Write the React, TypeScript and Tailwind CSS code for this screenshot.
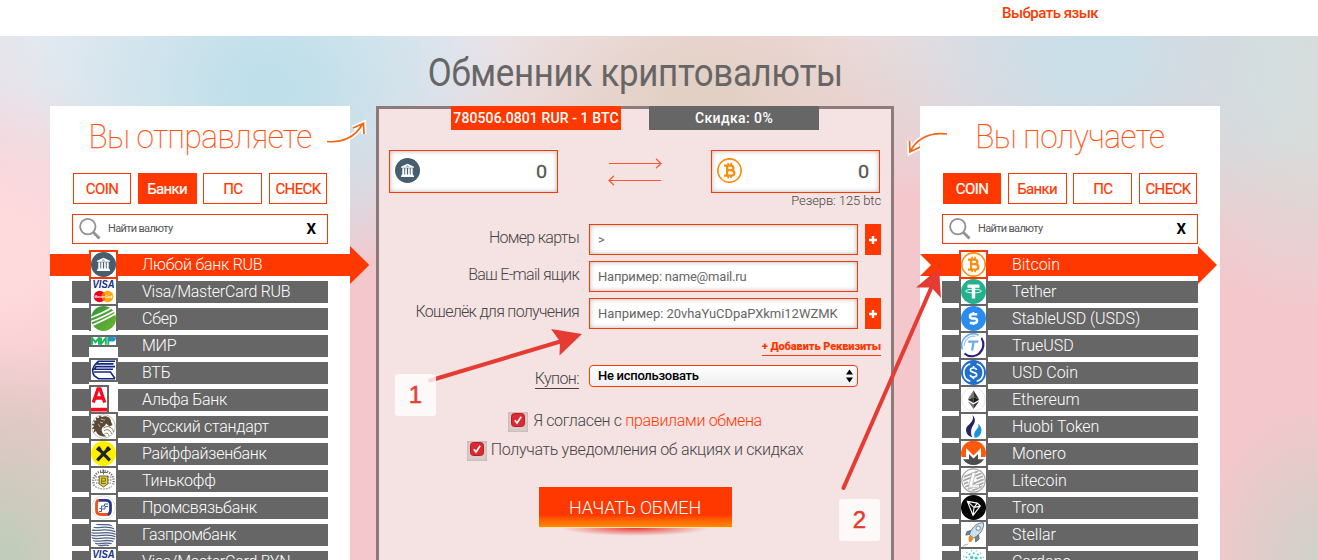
import type { ReactNode } from 'react';

type Item = { name: string; icon: ReactNode; w?: number; h?: number; offset?: boolean };

const Visa = () => (
  <svg viewBox="0 0 25 25" className="block h-full w-full bg-white">
    <text x="12.5" y="8.8" textAnchor="middle" textLength="22" lengthAdjust="spacingAndGlyphs" fontFamily="Liberation Sans" fontWeight="700" fontStyle="italic" fontSize="10.5" fill="#142d86">VISA</text>
    <circle cx="8.6" cy="17.5" r="5.8" fill="#eb001b" />
    <circle cx="16.6" cy="17.5" r="5.8" fill="#ffa90a" />
    <path d="M12.6 13.2a6 6 0 0 0 0 8.6a6 6 0 0 0 0-8.6" fill="#f36a12" />
    <text x="12.6" y="19" textAnchor="middle" textLength="18" lengthAdjust="spacingAndGlyphs" fontFamily="Liberation Sans" fontWeight="700" fontSize="4.4" fill="#fff">MasterCard</text>
  </svg>
);

const Bank = () => (
  <svg viewBox="0 0 25 25" className="block h-full w-full">
    <circle cx="12.5" cy="12.5" r="12.5" fill="#465e6e" />
    <path d="M6 9.7V8.7L12.5 5.8L19 8.7V9.7ZM7.3 10.2h2v6.2h-2zM10.2 10.2h1.7v6.2h-1.7zM13.1 10.2h1.7v6.2h-1.7zM15.7 10.2h2v6.2h-2zM6.8 16.4h11.4v1.1H6.8zM6 17.5h13v1.4H6z" fill="#fff" />
    <path d="M10.8 8.5l1.7-.9l1.7.9z" fill="#465e6e" />
  </svg>
);

const Btc = () => (
  <svg viewBox="0 0 25 25" className="block h-full w-full">
    <circle cx="12.5" cy="12.5" r="11.7" fill="#fff" stroke="#f98e0c" strokeWidth="1.7" />
    <g fill="none" stroke="#f98e0c">
      <path d="M7 7.6H13.5C17.3 7.6 17.3 12.2 13.7 12.2H10M13.7 12.2C18.5 12.2 18.4 17.6 13.8 17.6H7M10.1 7.6V17.6" strokeWidth="2.3" />
      <path d="M11.2 4.8V8M14.1 4.8V8M11.2 17V20.3M14.1 17V20.3" strokeWidth="1.7" />
    </g>
  </svg>
);

const Sber = () => (
  <svg viewBox="0 0 25 25" className="block h-full w-full">
    <defs>
      <linearGradient id="sber" x1="0" y1="0" x2="1" y2="1"><stop stopColor="#30943d" /><stop offset="1" stopColor="#70b52c" /></linearGradient>
      <clipPath id="sberClip"><circle cx="12.5" cy="12.5" r="12.5" /></clipPath>
    </defs>
    <circle cx="12.5" cy="12.5" r="12.5" fill="url(#sber)" />
    <g clipPath="url(#sberClip)" stroke="#fff" strokeWidth="1.7" fill="none">
      <path d="M-1 12C7 9 14 6 22 1M-1 16C8 13 16 9 25 4M-1 20C8 17 17 12 26 7" />
    </g>
  </svg>
);

const Mir = () => (
  <svg viewBox="0 0 25 8" preserveAspectRatio="none" className="block h-full w-full">
    <path d="M1 7.7V1L4.5 5.2L8 1V7.7M10 .5v6.5L14.8 1v6.7M17.3 7.7V1h5" fill="none" stroke="#19b35c" strokeWidth="1.9" />
    <path d="M17 .3H25C25 3 23.8 4.5 22 4.5H18.5C17.5 4 17 2 17 .3" fill="#1b94d2" />
  </svg>
);

const Vtb = () => (
  <svg viewBox="0 0 25 20" className="block h-full w-full">
    <g fill="none" stroke="#132a83" strokeWidth="1.6">
      <path d="M24 1.2H7.5L5.5 3.9H22.5M24 6.600H5L3.5 9.3H22M7 1.5C1 7 .5 12 3.5 16L7.5 18.7H24M3 12H19.5L24 18.500" />
    </g>
  </svg>
);

const Alfa = () => (
  <svg viewBox="0 0 16 25" className="block h-full w-full">
    <path d="M2.3 15.5L7 1.8H9L13.7 15.5M4 11H12" fill="none" stroke="#fa0a1c" strokeWidth="3.3" />
    <path d="M0 20.8H16V24.5H0z" fill="#fa0a1c" />
  </svg>
);

const RusStd = () => (
  <svg viewBox="0 0 25 25" className="block h-full w-full">
    <circle cx="12.5" cy="12.5" r="11.8" fill="#fff" stroke="#c8c2b8" strokeWidth="1" />
    <path d="M8.5 1.5L11 3C15 1 20 3.5 20 7.5L21.5 11L18.5 12.4L15 9.5C14 14 10 12 10.8 17C11.3 20 14 21.5 16 22.5C10 23 6 21 5 17L2.2 19L3.4 15L.8 15L3 12L.6 10.6L3.7 9.2L2 6.4L5.2 6.4L4.8 3.3L7.5 4.2z" fill="#5b4a35" />
    <path d="M12.5 14C17 10.5 22 14 22.5 18M13 17C17 14 20 17 20.5 20M13.5 20C16 18 18 20 18 22" fill="none" stroke="#8b7c69" strokeWidth="1" />
    <path d="M10 5L14 6.2M9 8L12 8.8M7.5 10L9 13" stroke="#d7cbb8" strokeWidth=".8" />
  </svg>
);

const Raif = () => (
  <svg viewBox="0 0 25 25" className="block h-full w-full">
    <circle cx="12.5" cy="12.5" r="12.5" fill="#fff000" />
    <path d="M6.2 19.3L12.5 12.8L18.8 19.3M12.5 12.8L7.5 7.7M12.5 12.8L17.5 7.7" fill="none" stroke="#232323" strokeWidth="3.2" />
    <path d="M4.8 8.3L8 5L10.5 7.5L7.5 10.4zM20.2 8.3L17 5L14.5 7.5L17.5 10.4z" fill="#232323" />
  </svg>
);

const Tink = () => (
  <svg viewBox="0 0 25 25" className="block h-full w-full">
    <g fill="none" stroke="#6a6a6a">
      <path d="M3.3 17.5A10.2 10.2 0 1 1 21.7 17.5" strokeWidth="2.2" strokeDasharray="1.1 1.3" />
      <path d="M4.5 9h4M4 12h4M5 15h3M16.5 9h4M17 12h4M17 15h3" strokeWidth="1.2" strokeDasharray="1.5 .7" />
      <path d="M9 4.5h7M12.5 1.5v5" strokeWidth="1.1" />
    </g>
    <path d="M8.2 8h8.6v8L12.5 19L8.2 16z" fill="#e3d029" stroke="#555" strokeWidth=".9" />
    <path d="M10.7 16V10.2h3.6v3h-3.6M10.7 15.5h4" fill="none" stroke="#776a20" strokeWidth="1" />
    <path d="M4 18.5Q12.5 23.5 21 18.5" fill="none" stroke="#a59f84" strokeWidth="1.2" strokeDasharray="2 .8" />
  </svg>
);

const Psb = () => (
  <svg viewBox="0 0 25 25" className="block h-full w-full">
    <circle cx="12.5" cy="12.5" r="11.8" fill="#fff" stroke="#e3e3e3" strokeWidth="1" />
    <path d="M17 19.5H10C6.5 19.5 5.5 18 5.5 15V9C5.5 7 6.2 5.5 8 5.2" fill="none" stroke="#f4511e" strokeWidth="2.8" />
    <path d="M8 5.3H15C18.2 5.3 19.5 6.6 19.5 9.8V15C19.5 17.3 18.8 19 16.8 19.6" fill="none" stroke="#2b3990" strokeWidth="2.8" />
    <path d="M8 16.5H10.5V14H14V11.5H17M8.5 13.5H10.5V11H13.5V9H17" fill="none" stroke="#4a5ba5" strokeWidth="1" />
  </svg>
);

const Gaz = () => (
  <svg viewBox="0 0 25 25" className="block h-full w-full">
    <defs><clipPath id="gaz"><circle cx="12.5" cy="12.5" r="12.2" /></clipPath></defs>
    <g clipPath="url(#gaz)" fill="none" stroke="#4f6189" strokeWidth="1.3">
      <path d="M3 2C9 4 15 1 22 4M1 5C8 7 15 3 24 7M0 8C8 10 15 5 25 10M0 10.5C8 13 16 8 25 12.5M0 13C8 16 16 10 25 15M0 15.5C8 19 16 13 25 17.5M1 18.5C9 21 16 16 24 20M4 21.5C10 23 15 19 22 22.5M7 24C12 24 15 22 19 24" />
    </g>
  </svg>
);

const Tether = () => (
  <svg viewBox="0 0 25 25" className="block h-full w-full">
    <circle cx="12.5" cy="12.5" r="12.5" fill="#22b08d" />
    <path d="M6.5 5.5H18.5V8.7H14.2V19.5H10.8V8.7H6.5z" fill="#fff" />
    <ellipse cx="12.5" cy="12.1" rx="8" ry="1.8" fill="none" stroke="#fff" strokeWidth=".9" />
  </svg>
);

const Stable = () => (
  <svg viewBox="0 0 25 25" className="block h-full w-full">
    <circle cx="12.5" cy="12.5" r="12.5" fill="#2b8cf0" />
    <path d="M16.2 8.3H11.4C9.5 8.3 9 9.2 9 10.3C9 11.6 9.9 12.4 11.5 12.4H13.7C15.2 12.4 16 13.3 16 14.7C16 16 15.2 16.9 13.7 16.9H8.8" fill="none" stroke="#fff" strokeWidth="2.5" />
    <path d="M12.3 6V8M12.5 17V19" stroke="#fff" strokeWidth="1.8" />
  </svg>
);

const TrueUsd = () => (
  <svg viewBox="0 0 25 25" className="block h-full w-full">
    <path d="M1.6 16.5A11.4 11.4 0 0 1 17.5 2.2" fill="none" stroke="#68abf2" strokeWidth="1.6" />
    <path d="M20.5 5A11.6 11.6 0 0 1 3.5 20.5A10.5 10.5 0 0 0 19.5 18.5C22.5 15 22.8 9.5 20.5 5" fill="#2b1f78" stroke="#2b1f78" strokeWidth="1.8" />
    <path d="M3.4 13A9.2 9.2 0 0 1 14.5 3.4" fill="none" stroke="#9bc7f5" strokeWidth="1.2" />
    <path d="M7.5 7.5H17.7L17 9.7H13.6L12.2 17.5H9.9L11.3 9.7H7z" fill="#68abf2" />
  </svg>
);

const Usdc = () => (
  <svg viewBox="0 0 25 25" className="block h-full w-full">
    <circle cx="12.5" cy="12.5" r="12.5" fill="#1f6ed0" />
    <g fill="none" stroke="#fff" strokeWidth="1.7">
      <path d="M9.3 3.7A9.2 9.2 0 0 0 9.3 21.3M15.7 3.7A9.2 9.2 0 0 1 15.7 21.3" />
      <path d="M15.6 10C15.2 8.4 14 8 12.4 8C10.4 8 9.4 8.8 9.4 10.1C9.4 13.3 15.7 11.4 15.7 14.8C15.7 16.3 14.4 17 12.6 17C10.7 17 9.5 16.4 9.2 14.8M12.5 6V8M12.5 17V19.2" />
    </g>
  </svg>
);

const Eth = () => (
  <svg viewBox="0 0 25 25" className="block h-full w-full">
    <circle cx="12.5" cy="12.5" r="11.8" fill="#fff" stroke="#e6e6e6" strokeWidth="1" />
    <path d="M12.5 3.2L6.8 12.6L12.5 10z" fill="#777" /><path d="M12.5 3.2L18.2 12.6L12.5 10z" fill="#343434" />
    <path d="M6.8 12.8L12.5 10V16.1z" fill="#333" /><path d="M18.2 12.8L12.5 10V16.1z" fill="#151515" />
    <path d="M6.8 14.2L12.5 17.5V22z" fill="#777" /><path d="M18.2 14.2L12.5 17.5V22z" fill="#303030" />
  </svg>
);

const Huobi = () => (
  <svg viewBox="0 0 25 25" className="block h-full w-full">
    <path d="M11.6 1C14.8 5 14.4 8 12.2 11.2C10 14.2 9.2 19 11.2 23.4C6 21.5 4.5 18 5.2 14.5C6 10.5 13.8 8.4 11.6 1" fill="#25265f" />
    <path d="M17.2 9.7C20.5 12.5 21 16 20 19C19 22 16.5 23.7 13.7 23.7C12.4 20.3 13.5 17.6 15.5 15.5C17.4 13.4 17.8 12 17.2 9.7" fill="#1894dc" />
  </svg>
);

const Monero = () => (
  <svg viewBox="0 0 25 25" className="block h-full w-full">
    <path d="M.6 16A12.5 12.5 0 1 1 24.4 16H20V7L12.5 14.5L5 7V16z" fill="#ff5a0a" />
    <path d="M2 18.2H8V13L12.5 17.5L17 13V18.2H23A12.5 12.5 0 0 1 2 18.2" fill="#4c4c4c" />
  </svg>
);

const Ltc = () => (
  <svg viewBox="0 0 25 25" className="block h-full w-full">
    <defs><clipPath id="ltc"><circle cx="12.5" cy="12.5" r="10.5" /></clipPath></defs>
    <circle cx="12.5" cy="12.5" r="11.7" fill="#fff" stroke="#a4a4a4" strokeWidth="1.2" />
    <g clipPath="url(#ltc)"><path d="M0 10L25 0M0 13.5L25 3.5M0 17L25 7M0 20.5L25 10.5M0 24L25 14M2 26.5L25 17" stroke="#a9a9a9" strokeWidth="1.8" /></g>
    <path d="M13.2 4.5L9.5 18.5H18M7.5 14.5L15.5 11" fill="none" stroke="#fff" strokeWidth="3.6" />
    <path d="M14.5 4.5L11.5 16.8H18.5V19.3H7.5L11 4.5z" fill="none" stroke="#aaa" strokeWidth=".7" />
  </svg>
);

const Tron = () => (
  <svg viewBox="0 0 25 25" className="block h-full w-full">
    <circle cx="12.5" cy="12.5" r="12.5" fill="#050505" />
    <path d="M6.4 6.4L16.4 8.1L19.3 11.1L12 20.3zM6.4 6.4L13 12.4L12 20.3M13 12.4L16.4 8.1M13 12.4L19.3 11.1" fill="none" stroke="#fff" strokeWidth="1.1" />
  </svg>
);

const Stellar = () => (
  <svg viewBox="0 0 25 25" className="block h-full w-full">
    <path d="M10 8.5L6 9.5L4.8 13.2L9 12.3zM17.5 12.5L18.2 17L14.7 20L14.3 15.5z" fill="#70879a" stroke="#4a5560" strokeWidth=".7" />
    <path d="M22.5.8C17 .2 11 4.5 8.3 12.5L12.5 16C20 12.5 23.2 6 22.5.8z" fill="#c8e3ef" stroke="#53616d" strokeWidth=".8" />
    <circle cx="17.2" cy="6.2" r="2.2" fill="#fff" stroke="#65747e" strokeWidth=".9" />
    <path d="M9 13.3L12 15.8C12 18.8 10.8 19.8 8.2 20.2C7.2 18 7 14.8 9 13.3" fill="#f08b22" />
    <path d="M2.2 24.5L4.6 22M5.2 23.5L7 21.6" stroke="#777" strokeWidth=".8" />
  </svg>
);

const Cardano = () => (
  <svg viewBox="0 0 25 25" className="block h-full w-full">
    <g fill="none" stroke="#3cc8c8" strokeLinecap="round">
      <circle cx="12.5" cy="12.5" r="11" strokeWidth="1.2" strokeDasharray="0 4.94" />
      <circle cx="12.5" cy="12.5" r="8.3" strokeWidth="2" strokeDasharray="0 4.35" />
      <circle cx="12.5" cy="12.5" r="4.4" strokeWidth="3.2" strokeDasharray="0 4.6" />
    </g>
  </svg>
);

const sendItems: Item[] = [
  { name: 'Любой банк RUB', icon: <Bank /> },
  { name: 'Visa/MasterCard RUB', icon: <Visa /> },
  { name: 'Сбер', icon: <Sber /> },
  { name: 'МИР', icon: <Mir />, h: 8, offset: true },
  { name: 'ВТБ', icon: <Vtb />, h: 20 },
  { name: 'Альфа Банк', icon: <Alfa />, w: 16 },
  { name: 'Русский стандарт', icon: <RusStd /> },
  { name: 'Райффайзенбанк', icon: <Raif /> },
  { name: 'Тинькофф', icon: <Tink /> },
  { name: 'Промсвязьбанк', icon: <Psb /> },
  { name: 'Газпромбанк', icon: <Gaz /> },
  { name: 'Visa/MasterCard BYN', icon: <Visa /> },
];

const getItems: Item[] = [
  { name: 'Bitcoin', icon: <Btc /> },
  { name: 'Tether', icon: <Tether /> },
  { name: 'StableUSD (USDS)', icon: <Stable /> },
  { name: 'TrueUSD', icon: <TrueUsd /> },
  { name: 'USD Coin', icon: <Usdc /> },
  { name: 'Ethereum', icon: <Eth /> },
  { name: 'Huobi Token', icon: <Huobi /> },
  { name: 'Monero', icon: <Monero /> },
  { name: 'Litecoin', icon: <Ltc /> },
  { name: 'Tron', icon: <Tron /> },
  { name: 'Stellar', icon: <Stellar /> },
  { name: 'Cardano', icon: <Cardano /> },
];

function Row({ item, active, side }: { item: Item; active: boolean; side: 'send' | 'get' }) {
  return (
    <li className="relative mb-[5px] flex h-[22px]">
      {active && side === 'send' && (
        <svg className="absolute -left-[22px] -top-2 h-[38px] w-[320px]" viewBox="0 0 320 38"><path d="M0 8H300V0L319.3 19L300 38V30H0z" fill="#ff3800" /></svg>
      )}
      {active && side === 'get' && (
        <svg className="absolute -left-[22px] -top-2 h-[38px] w-[320px]" viewBox="0 0 320 38"><path d="M0 8H278V0L297 19L278 38V30H0L11 19z" fill="#ff3800" /></svg>
      )}
      <div className={`flex w-full ${active ? '' : 'bg-[#666]'}`}>
        <div className={`relative -mt-1 ml-[17px] h-[29px] w-[29px] shrink-0 ${active ? 'z-10' : ''} ${item.offset ? 'pt-[4px]' : ''} bg-white`}>
          <div className={`border-2 bg-white ${active ? 'border-[#ff3800]' : 'border-[#666]'}`} style={{ width: (item.w ?? 25) + 4, height: (item.h ?? 25) + 4 }}>
            {item.icon}
          </div>
        </div>
        <span className={`relative ml-6 whitespace-nowrap text-[16px] font-light leading-[22px] text-white ${side === 'send' ? 'tracking-[-0.26px]' : 'tracking-[-0.03px]'}`}>{item.name}</span>
      </div>
    </li>
  );
}

function Panel({ title, items, tab, side }: { title: string; items: Item[]; tab: number; side: 'send' | 'get' }) {
  return (
    <section className="relative h-[454px] w-[300px] bg-white px-[22px]">
      <h2 className="flex h-[67px] items-center justify-center whitespace-nowrap text-[34px] font-thin tracking-[-0.5px] text-[#ff5010]">
        <span className="-mt-[7px] scale-x-[0.93] [-webkit-text-stroke:0.25px_#ff5010]">{title}</span>
      </h2>
      <div className="flex justify-between px-px">
        {['COIN', 'Банки', 'ПС', 'CHECK'].map((t, i) => (
          <button key={t} className={`h-[31px] border border-[#ff3800] text-center text-[15px] leading-[30px] tracking-[-0.6px] [-webkit-text-stroke:0.2px_currentColor] ${i === 0 || i === 3 ? 'w-[58px]' : 'w-[59px]'} ${i === tab ? 'bg-[#ff3800] text-white' : 'text-[#ff3800]'}`}>{t}</button>
        ))}
      </div>
      <div className="mt-[10px] flex h-[30px] items-center border border-[#ff3800] pl-[6px] pr-[11px]">
        <svg width="22" height="22" viewBox="0 0 22 22" fill="none" stroke="#919191"><circle cx="8.8" cy="8.6" r="7.7" strokeWidth="1.8" /><path d="M14.5 14.5L20.5 20.5" strokeWidth="2.8" /></svg>
        <span className="ml-[7px] mt-px flex-1 text-[11px] tracking-[-0.68px] text-[#555]">Найти валюту</span>
        <span className="mt-px text-[15px] font-bold text-black">X</span>
      </div>
      <ul className="mt-[10px]">
        {items.map((it, i) => <Row key={it.name} item={it} active={i === 0} side={side} />)}
      </ul>
      {side === 'send' ? (
        <svg className="absolute left-[275px] top-[13px]" width="44" height="32" viewBox="0 0 44 32" fill="none">
          <path d="M2 22.5C16 24 30 19 37.5 5M28 9L38.5 4.3L39 15" stroke="#fff" strokeWidth="5" />
          <path d="M2 22.5C16 24 30 19 37.5 5M28 9L38.5 4.3L39 15" stroke="#f5640f" strokeWidth="1.7" />
        </svg>
      ) : (
        <svg className="absolute -left-[14px] top-[20px]" width="44" height="32" viewBox="0 0 44 32" fill="none">
          <path d="M40 8C26 6.5 12 10 4 26M3.5 15L4 26L14 21" stroke="#fff" strokeWidth="5" />
          <path d="M41 8C26 6.5 12 10 4 26M3.5 15L4 26L14 21" stroke="#f5640f" strokeWidth="1.7" />
        </svg>
      )}
    </section>
  );
}

function Amount({ icon }: { icon: ReactNode }) {
  return (
    <div className="flex h-[43px] w-[169px] items-center justify-between border border-[#ff3800] bg-white pl-[5px] pr-[10px] shadow-[inset_0_0_5px_rgba(0,0,0,0.3)]">
      <span className="-mt-[2px] h-[25px] w-[25px]">{icon}</span>
      <span className="origin-right scale-x-110 text-[18px] text-[#555] [-webkit-text-stroke:0.3px_#555]">0</span>
    </div>
  );
}

function Field({ label, value, plus, valueClass }: { label: string; value: string; plus?: boolean; valueClass: string }) {
  return (
    <div className="mb-[6px] flex h-[31px]">
      <label className="w-[190px] shrink-0 whitespace-nowrap text-right text-[16px] font-light leading-[28px] tracking-[-0.7px] text-[#444]">{label}</label>
      <div className={`ml-[10px] w-[269px] shrink-0 whitespace-nowrap border border-[#ff3800] bg-white pl-2 text-[13px] leading-[30px] text-[#666] shadow-[inset_0_0_5px_rgba(0,0,0,0.3)] ${valueClass}`}>{value}</div>
      {plus && (
        <button className="ml-[7px] flex w-4 shrink-0 items-center justify-center bg-[#ff3800]">
          <svg width="8" height="8" viewBox="0 0 8 8" stroke="#fff" strokeWidth="2.4"><path d="M4 0V8M0 4H8" /></svg>
        </button>
      )}
    </div>
  );
}

function Check() {
  return (
    <span className="flex h-5 w-5 justify-center bg-[#dccccc] pt-[1px] shadow-[inset_0_0_3px_#b5a5a5]">
      <svg width="14" height="14" viewBox="0 0 14 14"><rect x=".5" y=".5" width="13" height="13" rx="3" fill="#dd2a31" stroke="#b31f26" /><path d="M3.8 7.3L6 10L10.2 3.7" fill="none" stroke="#fff" strokeWidth="1.7" /></svg>
    </span>
  );
}

export default function App() {
  return (
    <div className="relative h-[560px] w-[1318px] overflow-hidden bg-white font-['Roboto','Noto_Sans',sans-serif]">
      <header className="flex h-9 justify-end pr-[220px]">
        <a className="mt-[3px] whitespace-nowrap text-[15px] font-medium leading-5 tracking-[-0.5px] text-[#ff3800]">Выбрать язык</a>
      </header>
      <main className="h-[524px] bg-[#f4c7cc] bg-[radial-gradient(ellipse_180px_220px_at_0px_524px,#c2ccba_10%,transparent),radial-gradient(ellipse_180px_170px_at_0px_220px,#ffdadd_20%,transparent),radial-gradient(ellipse_240px_200px_at_270px_50px,#bfdfea_10%,#bfdfea00),radial-gradient(ellipse_260px_150px_at_700px_60px,#e2d0c4_10%,#e2d0c400),radial-gradient(ellipse_260px_200px_at_1090px_20px,#cbdfe8_15%,#cbdfe800),radial-gradient(ellipse_120px_160px_at_1318px_524px,#cfd2c9,#cfd2c900),linear-gradient(180deg,#d8dedb00_0%,#d8dedb00_100%),radial-gradient(ellipse_200px_240px_at_1318px_40px,#d9dcda_30%,#d9dcda00),radial-gradient(ellipse_520px_240px_at_200px_0px,#e4e9f0_30%,#e4e9f000),radial-gradient(ellipse_360px_150px_at_560px_0px,#f7dfe5_20%,#f7dfe500),radial-gradient(ellipse_300px_160px_at_880px_0px,#eedce0_10%,#eedce000)]">
        <div className="ml-[50px] w-[1170px]">
          <h1 className="flex h-[70px] items-center justify-center whitespace-nowrap pt-[4px] text-[38px] tracking-[-0.3px] text-[#666]"><span className="scale-x-[0.917]">Обменник криптовалюты</span></h1>
          <div className="flex justify-between">
            <Panel title="Вы отправляете" items={sendItems} tab={1} side="send" />

            <section className="h-[454px] w-[518px] border-x-[3px] border-t-[3px] border-[#8d7b7b] bg-[#f5e3e3] px-[10px]">
              <div className="-mt-[3px] flex justify-center gap-7 text-center text-[14px] font-medium leading-6 text-white">
                <div className="w-[170px] whitespace-nowrap bg-[#ff3800] tracking-[0.1px]">780506.0801 RUR - 1 BTC</div>
                <div className="w-[170px] bg-[#666] tracking-[0.4px]">Скидка: 0%</div>
              </div>
              <div className="mt-5 flex justify-between pr-[1px]">
                <Amount icon={<Bank />} />
                <svg className="mt-2" width="54" height="30" viewBox="0 0 54 30" fill="none" stroke="#ff5530" strokeWidth="1.2"><path d="M1 5.5H53M48 .7L53 5.5L48 10.3M53 22.5H1M6 17.7L1 22.5L6 27.3" /></svg>
                <Amount icon={<Btc />} />
              </div>
              <p className="h-[31px] text-right text-[13px] font-light leading-4 tracking-[-0.1px] text-[#444]">Резерв: 125 btc</p>
              <Field label="Номер карты" value=">" plus valueClass="" />
              <Field label="Ваш E-mail ящик" value="Например: name@mail.ru" valueClass="tracking-[-0.2px]" />
              <Field label="Кошелёк для получения" value="Например: 20vhaYuCDpaPXkmi12WZMK" plus valueClass="tracking-[-0.04px]" />
              <div className="flex h-[30px] justify-end pt-1">
                <a className="mt-px h-[16px] whitespace-nowrap border-b border-[#ff3800] text-[11px] font-black leading-[14px] tracking-[-0.1px] text-[#ff3800]">+ Добавить Реквизиты</a>
              </div>
              <div className="flex h-[22px]">
                <div className="flex w-[190px] justify-end"><span className="mt-[2px] h-[22px] border-b border-[#444] text-[16px] font-light leading-[23px] tracking-[-0.6px] text-[#444]">Купон:</span></div>
                <div className="ml-[10px] flex w-[269px] items-center justify-between rounded-[4px] border border-[#ff3800] bg-linear-to-b from-white to-[#eee] pl-2 pr-[4px] text-[13px] font-medium tracking-[-0.28px] text-black">
                  <span>Не использовать</span>
                  <svg width="7" height="14" viewBox="0 0 7 14"><path d="M0 5.5L3.5 .5L7 5.5zM0 8.5L3.5 13.5L7 8.5z" /></svg>
                </div>
              </div>
              <div className="mt-[25px] flex h-5 justify-center gap-[5px] whitespace-nowrap text-[16px] font-light leading-[18px] tracking-[-0.33px] text-[#444]"><Check /><span>Я согласен с <a className="text-[#ff3800]">правилами обмена</a></span></div>
              <div className="mt-[9px] flex h-5 justify-center gap-[4px] whitespace-nowrap text-[16px] font-light leading-[18px] tracking-[-0.33px] text-[#444]"><Check /><span>Получать уведомления об акциях и скидках</span></div>
              <div className="mt-[26px] flex flex-col items-center">
                <button className="z-10 h-[41px] w-[193px] border-b border-[#ffe0b0] bg-linear-to-b from-[#ff3800] from-70% to-[#ff8a00] text-[18px] font-light leading-[42px] tracking-[-0.2px] text-white">НАЧАТЬ ОБМЕН</button>
                <div className="h-[8px] w-[150px] bg-[radial-gradient(ellipse_at_top,#e83b35,transparent_70%)]" />
              </div>
            </section>

            <Panel title="Вы получаете" items={getItems} tab={0} side="get" />
          </div>
        </div>
      </main>

      <svg className="pointer-events-none absolute left-0 top-0 z-20" width="1318" height="560" viewBox="0 0 1318 560">
        <g stroke="#e63b32" strokeWidth="4" strokeLinecap="round"><path d="M430 380.5L562 341M843.5 488L932 286" /></g>
        <path d="M582 334L551 329L560 341.5L559.5 355.5zM939 268L916 287.5L931.5 287.5L941 298z" fill="#e63b32" />
      </svg>
      <div className="absolute left-[395px] top-[374px] z-20 flex h-[42px] w-[41px] items-center justify-center rounded-[3px] bg-white/80 font-['Liberation_Sans'] text-[24px] text-[#e63b32] [-webkit-text-stroke:0.5px_#e63b32]">1</div>
      <div className="absolute left-[839px] top-[499px] z-20 flex h-[42px] w-[41px] items-center justify-center rounded-[3px] bg-white/80 font-['Liberation_Sans'] text-[24px] text-[#e63b32] [-webkit-text-stroke:0.5px_#e63b32]">2</div>
    </div>
  );
}
